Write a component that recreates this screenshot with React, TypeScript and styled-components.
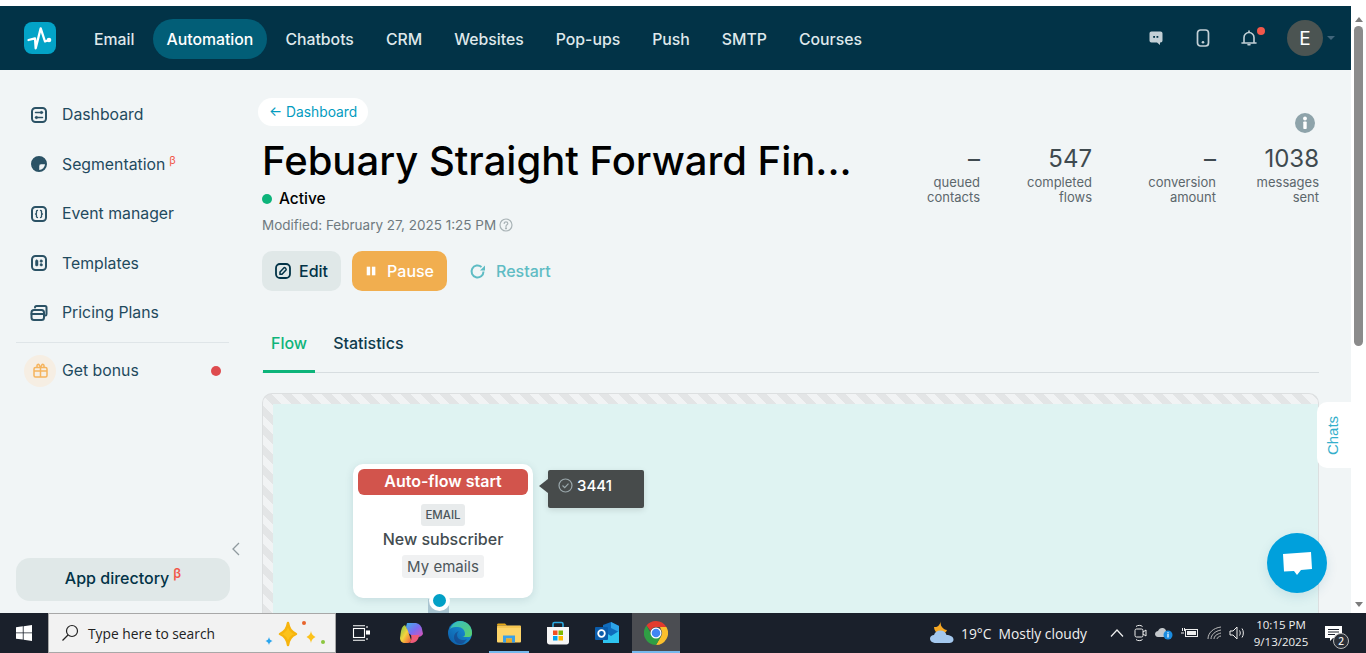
import React from "react";
import styled, { createGlobalStyle } from "styled-components";

const GlobalStyle = createGlobalStyle`
  html, body { margin: 0; padding: 0; height: 100%; overflow: hidden; background: #fff; }
  * { box-sizing: border-box; }
  body { font-family: Inter, "Noto Sans", sans-serif; }
`;

const navItems = ["Email", "Automation", "Chatbots", "CRM", "Websites", "Pop-ups", "Push", "SMTP", "Courses"];

const stats = [
  { value: "–", label: ["queued", "contacts"] },
  { value: "547", label: ["completed", "flows"] },
  { value: "–", label: ["conversion", "amount"] },
  { value: "1038", label: ["messages", "sent"] },
];

const SideIcon = ({ children }: { children: React.ReactNode }) => (
  <svg width="18" height="18" viewBox="0 0 18 18" fill="none" stroke="#2b5265" strokeWidth="2" strokeLinecap="round" strokeLinejoin="round">
    {children}
  </svg>
);

const sideItems = [
  {
    label: "Dashboard",
    icon: (
      <SideIcon>
        <rect x="2" y="2" width="14" height="14" rx="3.5" />
        <path d="M5.500 6.500h7M5.500 11.500h7" strokeWidth="1.500" />
        <circle cx="11.500" cy="6.500" r="1.100" fill="#2b5265" strokeWidth="1" />
        <circle cx="6.500" cy="11.500" r="1.100" fill="#2b5265" strokeWidth="1" />
      </SideIcon>
    ),
  },
  {
    label: "Segmentation",
    beta: true,
    icon: (
      <SideIcon>
        <circle cx="9" cy="9" r="7" />
        <path d="M9 2.500a6.500 6.500 0 0 1 6.500 6.500H11a2 2 0 0 0-2 2v4.500a6.500 6.500 0 0 1 0-13z" fill="#2b5265" strokeWidth="0.5" />
      </SideIcon>
    ),
  },
  {
    label: "Event manager",
    icon: (
      <SideIcon>
        <rect x="2" y="2" width="14" height="14" rx="3.5" />
        <path d="M7.500 5.500c-1.500 0-1 1.500-1 2.500 0 .6-.5 1-1 1 .5 0 1 .4 1 1 0 1-.5 2.500 1 2.500M10.500 5.500c1.500 0 1 1.500 1 2.500 0 .6.5 1 1 1-.5 0-1 .4-1 1 0 1 .5 2.500-1 2.500" strokeWidth="1.300" />
      </SideIcon>
    ),
  },
  {
    label: "Templates",
    icon: (
      <SideIcon>
        <rect x="2" y="2" width="14" height="14" rx="3.500" />
        <rect x="5.500" y="6" width="2.500" height="6" rx="1" fill="#2b5265" strokeWidth="0.5" />
        <rect x="10" y="6" width="2.500" height="2.300" rx="1" fill="#2b5265" strokeWidth="0.5" />
        <rect x="10" y="9.700" width="2.500" height="2.300" rx="1" fill="#2b5265" strokeWidth="0.5" />
      </SideIcon>
    ),
  },
  {
    label: "Pricing Plans",
    icon: (
      <SideIcon>
        <rect x="1.500" y="6" width="12.500" height="10" rx="2.500" />
        <path d="M1.500 10h12.500" />
        <path d="M5 3.500c0-1 .6-1.500 1.500-1.500H15c.8 0 1.500.7 1.500 1.500V10c0 .8-.4 1.500-1 1.500" />
      </SideIcon>
    ),
  },
];

const LogoMark = () => (
  <svg width="32" height="32" viewBox="0 0 32 32" fill="none">
    <rect width="32" height="32" rx="8" fill="#03a3c7" />
    <path d="M4.500 18 11 16.300l.7 10 5-20L21 19.500l4-1.500" stroke="#fff" strokeWidth="2.300" strokeLinecap="round" strokeLinejoin="round" />
    <circle cx="25" cy="18" r="2.300" fill="#fff" />
  </svg>
);

const WindowsLogo = () => (
  <svg width="16" height="16" viewBox="0 0 16 16" fill="#fff">
    <path d="M0 2.300 6.800 1.300v6.200H0zM7.600 1.200 16 0v7.500H7.600zM0 8.300h6.800v6.300L0 13.700zM7.600 8.300H16V16l-8.400-1.200z" />
  </svg>
);

const Sparkles = () => (
  <svg width="70" height="30" viewBox="0 0 70 30">
    <path d="M26 5c1 6 3 8.500 8 11-5 2.500-7 5-8 11-1-6-3-8.500-8-11 5-2.500 7-5 8-11z" fill="#fcc21b" stroke="#f6b40e" strokeWidth="2.500" strokeLinejoin="round" />
    <path d="M49 13c.5 3 1.500 4.500 4.500 6-3 1.500-4 3-4.500 6-.5-3-1.500-4.500-4.500-6 3-1.500 4-3 4.500-6z" fill="#fcc21b" />
    <path d="M7 19c.4 2 1 3 3.500 4-2.500 1-3.100 2-3.500 4-.4-2-1-3-3.500-4 2.500-1 3.100-2 3.500-4z" fill="#2aa5ee" />
    <circle cx="42" cy="5" r="2" fill="#e8642c" />
    <circle cx="61" cy="24" r="2" fill="#8cc63f" />
  </svg>
);

const TaskViewIcon = () => (
  <svg width="18" height="16" viewBox="0 0 18 16" fill="none" stroke="#fff" strokeWidth="1.100">
    <path d="M1 .8h12M1 15.200h12" />
    <rect x="1.500" y="3.500" width="11" height="9" />
    <path d="M15 1v2M15 13v2" />
    <rect x="14.500" y="6" width="3" height="3" fill="#fff" />
  </svg>
);

const CopilotIcon = () => (
  <svg width="24" height="24" viewBox="0 0 24 24">
    <defs>
      <linearGradient id="cop1" x1="0" y1="0" x2="1" y2="1">
        <stop offset="0" stopColor="#3fb0e8" />
        <stop offset="0.5" stopColor="#7b6cf0" />
        <stop offset="1" stopColor="#e34fb0" />
      </linearGradient>
      <linearGradient id="cop2" x1="0" y1="0" x2="1" y2="1">
        <stop offset="0" stopColor="#6fc24a" />
        <stop offset="0.5" stopColor="#f4d33d" />
        <stop offset="1" stopColor="#f0533e" />
      </linearGradient>
    </defs>
    <path d="M8 2h8c3 0 6 2 7 6l1 5c-1 2-3 3-5 3h-4L9 12 7 6z" fill="url(#cop1)" />
    <path d="M2 10C3 6 4 5 6 4l3 6 3 9c0 2-1 3-3 3H6c-3 0-5-2-5-5z" fill="url(#cop2)" />
    <path d="M12 14h8c0 4-3 8-7 8h-2c1-2 2-5 1-8z" fill="#ee5b7a" />
  </svg>
);

const EdgeIcon = () => (
  <svg width="24" height="24" viewBox="0 0 24 24">
    <defs>
      <linearGradient id="edge1" x1="0" y1="1" x2="1" y2="0">
        <stop offset="0" stopColor="#0c59a4" />
        <stop offset="1" stopColor="#1b9de2" />
      </linearGradient>
      <linearGradient id="edge2" x1="0" y1="0" x2="1" y2="1">
        <stop offset="0" stopColor="#33bcc8" />
        <stop offset="1" stopColor="#5ed16a" />
      </linearGradient>
    </defs>
    <circle cx="12" cy="12" r="12" fill="url(#edge1)" />
    <path d="M2 8C4 3 8 0 12 0c7 0 12 5 12 12 0 2-1 4-3 4h-7c2 0 3-1 3-3 0-4-3-7-7-7-3 0-6 0-8 2z" fill="url(#edge2)" />
    <path d="M9 14c0 3 3 5 6 5 2 0 3-.4 4-1-2 3-4 5-7 5-3 0-6-3-6-7 0-3 2-5 5-6-1 1-2 2-2 4z" fill="#1a2e6e" opacity="0.45" />
  </svg>
);

const ExplorerIcon = () => (
  <svg width="24" height="20" viewBox="0 0 24 20">
    <path d="M0 2c0-1 .5-1.500 1.500-1.500H8L10 2.500H0z" fill="#e6a817" />
    <rect x="0" y="2.500" width="24" height="17" rx="1" fill="#fdd469" />
    <path d="M0 4h24" stroke="#f0b93a" strokeWidth="1" />
    <path d="M6 19.500V12.500h12v7h-3V15.500H9v4z" fill="#3aa0e8" />
    <rect x="9" y="15.500" width="6" height="4" fill="#e8a92a" />
  </svg>
);

const StoreIcon = () => (
  <svg width="24" height="24" viewBox="0 0 24 24">
    <path d="M7 6V3c0-1 .6-1.500 1.500-1.500h7C16.400 1.500 17 2 17 3v3" fill="none" stroke="#2aa9e0" strokeWidth="1.600" />
    <path d="M1 6h22v15c0 1.500-1 2.500-2.500 2.500h-17C2 23.500 1 22.500 1 21z" fill="#f6f6f6" />
    <rect x="7" y="9.500" width="4.500" height="4.500" fill="#f25022" />
    <rect x="12.500" y="9.500" width="4.500" height="4.500" fill="#7fba00" />
    <rect x="7" y="15" width="4.500" height="4.500" fill="#00a4ef" />
    <rect x="12.500" y="15" width="4.500" height="4.500" fill="#ffb900" />
  </svg>
);

const OutlookIcon = () => (
  <svg width="24" height="24" viewBox="0 0 24 24">
    <path d="M8 4 16 1l8 4v14H8z" fill="#0f6cbd" />
    <path d="M16 1l8 4v6l-8-4z" fill="#2da4e8" />
    <path d="M8 10l8 5 8-5v12H8z" fill="#2ec4f0" />
    <rect x="0" y="6" width="13" height="13" rx="1" fill="#0a5cab" />
    <circle cx="6.500" cy="12.500" r="3.300" fill="none" stroke="#fff" strokeWidth="1.800" />
  </svg>
);

const ChromeIcon = () => (
  <svg width="24" height="24" viewBox="0 0 24 24">
    <path d="M12 0a12 12 0 0 1 10.400 6H12a6 6 0 0 0-5.600 3.800L2.500 4.600A12 12 0 0 1 12 0z" fill="#e33b2e" />
    <path d="M22.400 6A12 12 0 0 1 12 24l5.200-9A6 6 0 0 0 17 8.500L16 6z" fill="#fbc02d" />
    <path d="M2.500 4.600 7.700 14a6 6 0 0 0 9.500 1L12 24A12 12 0 0 1 2.500 4.600z" fill="#2f9e44" />
    <circle cx="12" cy="12" r="5.500" fill="#fff" />
    <circle cx="12" cy="12" r="4.300" fill="#4285f4" />
  </svg>
);

const WeatherIcon = () => (
  <svg width="26" height="26" viewBox="0 0 26 26">
    <path d="M12 1c-1 3 0 6 3 8 1 .6 2 1 3 1-1 3-4 5-8 4-3-1-5-4-5-7 2 .3 4-.2 5-2 1-1.500 2-3 2-4z" fill="#f7a823" />
    <path d="M7 23c-3 0-6-1.500-6-4.500 0-2 2-3.500 4-3.500 1-3 3-4.500 6.500-4.500 3 0 5.500 2 6 4.500 3.500 0 7 1.500 7 4.500s-3 3.500-6 3.500z" fill="#a4c8ee" />
  </svg>
);

const Page = styled.div`
  width: 1366px;
  height: 653px;
  display: flex;
  flex-direction: column;
  overflow: hidden;
`;

const Browser = styled.div`
  flex: 1;
  min-height: 0;
  display: flex;
`;

const Viewport = styled.div`
  position: relative;
  flex: 1;
  min-width: 0;
  padding-top: 6px;
  display: flex;
  flex-direction: column;
  background: #fff;
`;

const Scrollbar = styled.div`
  width: 15px;
  display: flex;
  flex-direction: column;
  align-items: center;
  background: #fff;
`;

const ScrollArrow = styled.div<{ $down?: boolean }>`
  width: 0;
  height: 0;
  margin: 17px 0 4px;
  border-left: 4.500px solid transparent;
  border-right: 4.500px solid transparent;
  border-bottom: 5px solid #7c7c7c;
  ${(p) => p.$down && "margin: auto 0 6px; border-bottom: 0; border-top: 5px solid #7c7c7c;"}
`;

const ScrollThumb = styled.div`
  width: 9px;
  height: 320px;
  border-radius: 5px;
  background: #8b8b8b;
`;

const Header = styled.header`
  height: 64px;
  flex-shrink: 0;
  display: flex;
  align-items: center;
  padding: 0 16px 0 24px;
  background: #023347;
`;

const Nav = styled.nav`
  display: flex;
  align-items: center;
  gap: 4px;
  margin: 2px 0 0 24px;
`;

const NavItem = styled.a<{ $active?: boolean }>`
  height: 40px;
  padding: 0 14px;
  display: flex;
  align-items: center;
  border-radius: 20px;
  font-size: 15.800px;
  font-weight: 500;
  color: ${(p) => (p.$active ? "#fff" : "#dfe8eb")};
  background: ${(p) => (p.$active ? "#025e77" : "transparent")};
`;

const HeaderTools = styled.div`
  margin-left: auto;
  display: flex;
  align-items: center;
`;

const ToolSlot = styled.div<{ $width: number }>`
  position: relative;
  width: ${(p) => p.$width}px;
  height: 24px;
  display: flex;
  align-items: center;
  justify-content: center;
`;

const BellDot = styled.span`
  position: absolute;
  top: 1px;
  right: 7px;
  width: 8px;
  height: 8px;
  border-radius: 50%;
  background: #f2584b;
`;

const Avatar = styled.div`
  width: 36px;
  height: 36px;
  margin-left: 15px;
  border-radius: 50%;
  display: flex;
  align-items: center;
  justify-content: center;
  background: #4b5452;
  color: #fff;
  font-size: 19px;
`;

const Caret = styled.span`
  width: 0;
  height: 0;
  margin-left: 4px;
  border-left: 4px solid transparent;
  border-right: 4px solid transparent;
  border-top: 4px solid #41657a;
`;

const Body = styled.div`
  flex: 1;
  min-height: 0;
  display: flex;
  overflow: hidden;
  background: #f1f5f6;
`;

const Sidebar = styled.aside`
  position: relative;
  width: 262px;
  flex-shrink: 0;
  padding: 20px 32px 12px 16px;
  display: flex;
  flex-direction: column;
`;

const SideRow = styled.div`
  height: 49.500px;
  display: flex;
  align-items: center;
  gap: 14px;
  padding-left: 14px;
  color: #1f4a5e;
  font-size: 15.800px;
`;

const Beta = styled.sup`
  margin-left: 4px;
  font-size: 11px;
  line-height: 0;
  vertical-align: 6px;
  color: #f2584b;
`;

const ButtonBeta = styled(Beta)`
  font-size: 13px;
  font-weight: 600;
`;

const SideDivider = styled.div`
  height: 1px;
  margin: 4px 1px 12px 0;
  background: #dfe5e8;
`;

const BonusRow = styled.div`
  display: flex;
  align-items: center;
  gap: 6px;
  padding-left: 8px;
  color: #1f4a5e;
  font-size: 15.800px;
`;

const BonusIcon = styled.div`
  width: 32px;
  height: 32px;
  border-radius: 50%;
  display: flex;
  align-items: center;
  justify-content: center;
  background: #f6eee3;
`;

const RedDot = styled.span`
  width: 10px;
  height: 10px;
  margin: 0 9px 0 auto;
  border-radius: 50%;
  background: #de4b4e;
`;

const CollapseHandle = styled.div`
  position: absolute;
  left: 231px;
  top: 472px;
  line-height: 0;
`;

const AppDirectory = styled.button`
  margin-top: auto;
  height: 43px;
  padding: 0 0 3px;
  border: 0;
  border-radius: 14px;
  background: #e0e8e8;
  color: #023347;
  font: 500 16px Inter, "Noto Sans", sans-serif;
`;

const Main = styled.main`
  flex: 1;
  min-width: 0;
  padding: 28px 32px 0 0;
  display: flex;
  flex-direction: column;
`;

const TopRow = styled.div`
  display: flex;
  justify-content: space-between;
`;

const BackLink = styled.a`
  display: inline-block;
  height: 28px;
  margin-left: -4px;
  padding: 0 11px;
  border-radius: 14px;
  background: #fff;
  color: #039cc0;
  font-size: 13.800px;
  line-height: 28px;
`;

const TitleBlock = styled.div`
  min-width: 0;
`;

const Title = styled.h1`
  margin: 12px 0 0;
  font-size: 40px;
  font-weight: 500;
  line-height: 46px;
  color: #000;
  white-space: nowrap;
`;

const StatusLine = styled.div`
  margin-top: 5px;
  display: flex;
  align-items: center;
  gap: 7px;
  font-size: 15.500px;
  font-weight: 500;
  line-height: 20px;
  color: #000;
`;

const StatusDot = styled.span`
  width: 10px;
  height: 10px;
  border-radius: 50%;
  background: #0db47a;
`;

const Modified = styled.div`
  margin-top: 6px;
  display: flex;
  align-items: center;
  gap: 3px;
  font-size: 13.500px;
  line-height: 20px;
  color: #6f7a80;
`;

const Actions = styled.div`
  margin-top: 16px;
  display: flex;
  gap: 11px;
`;

const ActionButton = styled.button<{ $kind: "edit" | "pause" | "restart" }>`
  height: 40px;
  padding: 0 ${(p) => ({ edit: "13px", pause: "13px 0 13px", restart: "8px" })[p.$kind]};
  ${(p) => p.$kind === "pause" && "width: 95px;"}
  ${(p) => p.$kind === "restart" && "margin-left: 3px;"}
  display: flex;
  align-items: center;
  gap: ${(p) => (p.$kind === "edit" ? 8 : 10)}px;
  border: 0;
  border-radius: 10px;
  font: 500 16px Inter, "Noto Sans", sans-serif;
  color: ${(p) => ({ edit: "#023347", pause: "#fff", restart: "#5fbcc4" })[p.$kind]};
  background: ${(p) => ({ edit: "#e0e8e8", pause: "#f1ae4f", restart: "transparent" })[p.$kind]};
`;

const StatsColumn = styled.div`
  display: flex;
  flex-direction: column;
  align-items: flex-end;
  padding-top: 15px;
`;

const InfoBadge = styled.div`
  width: 20px;
  height: 20px;
  margin-right: 4px;
  line-height: 0;
`;

const StatsGrid = styled.div`
  margin-top: 11px;
  display: grid;
  grid-template-columns: 61px 112px 124px 103px;
  text-align: right;
`;

const StatValue = styled.div`
  font-size: 24px;
  line-height: 30px;
  color: #3f4a4f;
`;

const StatLabel = styled.div`
  margin-top: 1px;
  font-size: 13px;
  line-height: 15px;
  color: #5c676c;
  white-space: nowrap;
`;

const Tabs = styled.div`
  margin-top: 23px;
  height: 59px;
  flex-shrink: 0;
  padding-left: 1px;
  display: flex;
  gap: 10px;
  border-bottom: 1px solid #d7dde0;
`;

const Tab = styled.div<{ $active?: boolean }>`
  height: 59px;
  padding: 19px 8px 0;
  font-size: 16px;
  font-weight: 500;
  line-height: 20px;
  color: ${(p) => (p.$active ? "#0db47a" : "#0f3b4d")};
  border-bottom: 3px solid ${(p) => (p.$active ? "#0db47a" : "transparent")};
`;

const CanvasFrame = styled.section`
  margin-top: 20px;
  flex: 1;
  padding: 10px 0 0 10px;
  border: 1px solid #dcdfe0;
  border-bottom: 0;
  border-radius: 10px 10px 0 0;
  display: flex;
  background: repeating-linear-gradient(45deg, #e3e5e6 0 7px, #f1f3f4 7px 14px);
`;

const CanvasArea = styled.div`
  position: relative;
  flex: 1;
  background: #dff3f2;
`;

const FlowNode = styled.div`
  position: absolute;
  left: 80px;
  top: 60px;
  width: 180px;
  height: 134px;
  padding: 5px;
  border-radius: 10px;
  background: #fff;
  box-shadow: 0 2px 8px rgba(0, 60, 80, 0.12);
  display: flex;
  flex-direction: column;
  align-items: center;
`;

const NodeHeader = styled.div`
  width: 100%;
  height: 26px;
  border-radius: 6px;
  background: #d2544c;
  color: #fff;
  font-size: 16px;
  font-weight: 600;
  line-height: 25px;
  text-align: center;
`;

const TypeTag = styled.div`
  margin-top: 9px;
  height: 22px;
  padding: 0 4px;
  border-radius: 3px;
  background: #e8ebec;
  color: #4c565b;
  font-size: 11.500px;
  font-weight: 500;
  line-height: 22px;
`;

const NodeName = styled.div`
  margin-top: 3px;
  font-size: 16px;
  font-weight: 500;
  line-height: 20px;
  color: #434c50;
`;

const NodeList = styled.div`
  margin-top: 6px;
  height: 23px;
  padding: 0 5px;
  border-radius: 3px;
  background: #f0f1f2;
  color: #4d565a;
  font-size: 15px;
  line-height: 23px;
`;

const NodeConnector = styled.div`
  position: absolute;
  left: 75px;
  bottom: -15px;
  width: 21px;
  height: 14px;
  background: #a9c5d1;
`;

const NodePort = styled.div`
  position: absolute;
  left: 76px;
  bottom: -13px;
  width: 21px;
  height: 21px;
  border: 4px solid #fff;
  border-radius: 50%;
  background: #03a0c6;
`;

const CountTip = styled.div`
  position: absolute;
  left: 275px;
  top: 66px;
  width: 96px;
  height: 38px;
  padding: 0 0 7px 10px;
  display: flex;
  align-items: center;
  gap: 4px;
  border-radius: 2px;
  background: #474b4b;
  color: #fff;
  font-size: 15px;
  font-weight: 500;
  box-shadow: 0 2px 6px rgba(0, 0, 0, 0.12);
  &::before {
    content: "";
    position: absolute;
    left: -9px;
    top: 9px;
    border-top: 7px solid transparent;
    border-bottom: 7px solid transparent;
    border-right: 9px solid #474b4b;
  }
`;

const ChatsTab = styled.div`
  position: absolute;
  right: 0;
  top: 402px;
  width: 34px;
  height: 66px;
  padding-right: 2px;
  border-radius: 10px 0 0 10px;
  background: #fff;
  display: flex;
  align-items: center;
  justify-content: center;
  color: #35afcb;
  font: 15px "Liberation Sans", sans-serif;
  span {
    transform: rotate(-90deg);
  }
`;

const ChatBubble = styled.div`
  position: absolute;
  left: 1267px;
  top: 533px;
  width: 60px;
  height: 60px;
  border-radius: 50%;
  background: #00a0dc;
  box-shadow: 0 4px 12px rgba(0, 100, 140, 0.12);
  display: flex;
  align-items: center;
  justify-content: center;
`;

const Taskbar = styled.footer`
  height: 40px;
  flex-shrink: 0;
  display: flex;
  align-items: stretch;
  background: #1a202b;
  color: #fff;
  font-family: "Open Sans", "Noto Sans", sans-serif;
`;

const StartButton = styled.div`
  width: 48px;
  display: flex;
  align-items: center;
  justify-content: center;
`;

const SearchBox = styled.div`
  width: 288px;
  padding: 0 3px 0 12px;
  display: flex;
  align-items: center;
  gap: 9px;
  background: #f2f2f2;
  border: 1px solid #a8a8a8;
  color: #222;
  font-size: 13.800px;
`;

const SearchHint = styled.span`
  flex: 1;
  white-space: nowrap;
`;

const TaskIcon = styled.div<{ $open?: boolean; $active?: boolean; $width?: number }>`
  position: relative;
  width: ${(p) => p.$width ?? 48}px;
  margin-right: ${(p) => (p.$active ? 0 : "1px")};
  display: flex;
  align-items: center;
  justify-content: center;
  background: ${(p) => (p.$active ? "#4b4d52" : "transparent")};
  ${(p) =>
    p.$open &&
    `&::after {
      content: "";
      position: absolute;
      bottom: 0;
      left: 50%;
      width: ${p.$active ? 48 : 40}px;
      height: 2px;
      transform: translateX(-50%);
      background: #76b9ed;
    }`}
`;

const Tray = styled.div`
  margin-left: auto;
  display: flex;
  align-items: center;
  height: 100%;
  font-size: 13.800px;
  color: #f0f0f0;
`;

const WeatherText = styled.span`
  margin: 0 18px 0 6px;
  white-space: nowrap;
`;

const TraySlot = styled.div<{ $width: number }>`
  width: ${(p) => p.$width}px;
  display: flex;
  align-items: center;
  justify-content: center;
`;

const Clock = styled.div`
  width: 60px;
  margin-left: 3px;
  text-align: center;
  font-size: 11.500px;
  line-height: 17px;
  white-space: nowrap;
`;

const NotifyWrap = styled.div`
  position: relative;
  width: 30px;
  height: 100%;
  margin: 0 18px 0 7px;
  display: flex;
  align-items: center;
  justify-content: center;
`;

const NotifyCount = styled.span`
  position: absolute;
  left: 15px;
  top: 20px;
  width: 16px;
  height: 16px;
  border-radius: 50%;
  border: 1px solid #b8b8b8;
  background: #2a2f38;
  font-size: 10px;
  font-weight: 600;
  line-height: 14px;
  text-align: center;
`;

const App = () => (
  <Page>
    <GlobalStyle />
    <Browser>
      <Viewport>
        <Header>
          <LogoMark />
          <Nav>
            {navItems.map((item) => (
              <NavItem key={item} $active={item === "Automation"}>
                {item}
              </NavItem>
            ))}
          </Nav>
          <HeaderTools>
            <ToolSlot $width={47}>
              <svg width="16" height="16" viewBox="0 0 16 16">
                <path d="M3.500 1.500h9c1.200 0 2 .8 2 2v7c0 1.200-.8 2-2 2h-.5v2.500l-3-2.500H3.500c-1.200 0-2-.8-2-2v-7c0-1.200.8-2 2-2z" fill="#c3d0d6" />
                <rect x="5.200" y="6" width="1.800" height="1.800" fill="#023347" />
                <rect x="8.500" y="6" width="1.800" height="1.800" fill="#023347" />
              </svg>
            </ToolSlot>
            <ToolSlot $width={47}>
              <svg width="14" height="18" viewBox="0 0 14 18" fill="none">
                <rect x="1.500" y="1" width="11" height="16" rx="3" stroke="#c3d0d6" strokeWidth="1.700" />
                <circle cx="7" cy="13.200" r="1.300" fill="#c3d0d6" />
              </svg>
            </ToolSlot>
            <ToolSlot $width={46}>
              <svg width="18" height="18" viewBox="0 0 18 18" fill="none" stroke="#c3d0d6" strokeWidth="1.600" strokeLinecap="round">
                <path d="M4 13.500V8.500a5 5 0 0 1 10 0v5M2 14h14" />
                <path d="M8 15.800h2M9 2v1" />
              </svg>
              <BellDot />
            </ToolSlot>
            <Avatar>E</Avatar>
            <Caret />
          </HeaderTools>
        </Header>
        <Body>
          <Sidebar>
            {sideItems.map((item) => (
              <SideRow key={item.label}>
                {item.icon}
                <span>
                  {item.label}
                  {item.beta && <Beta>β</Beta>}
                </span>
              </SideRow>
            ))}
            <SideDivider />
            <BonusRow>
              <BonusIcon>
                <svg width="15" height="15" viewBox="0 0 15 15" fill="none" stroke="#f5b45e" strokeWidth="1.500" strokeLinejoin="round">
                  <rect x="1" y="4.500" width="13" height="9.500" rx="1.500" />
                  <path d="M1 8h13M7.500 4.500V14" />
                  <path d="M4 4.500V2.500c0-1 1.500-1.500 2-.8l1.500 2.800L9 1.700c.5-.7 2-.2 2 .8v2" />
                </svg>
              </BonusIcon>
              <span>Get bonus</span>
              <RedDot />
            </BonusRow>
            <CollapseHandle>
              <svg width="10" height="14" viewBox="0 0 10 14" fill="none" stroke="#8f9a9e" strokeWidth="1.300">
                <path d="M8 1 2 7l6 6" />
              </svg>
            </CollapseHandle>
            <AppDirectory>
              App directory<ButtonBeta>β</ButtonBeta>
            </AppDirectory>
          </Sidebar>
          <Main>
            <TopRow>
              <TitleBlock>
                <BackLink>← Dashboard</BackLink>
                <Title>Febuary Straight Forward Fin...</Title>
                <StatusLine>
                  <StatusDot />
                  Active
                </StatusLine>
                <Modified>
                  Modified: February 27, 2025 1:25 PM
                  <svg width="14" height="14" viewBox="0 0 14 14" fill="none" stroke="#a9b3b6" strokeWidth="1.200">
                    <circle cx="7" cy="7" r="6" />
                    <path d="M5.200 5.500c0-2.300 3.600-2.300 3.600 0 0 1.400-1.800 1.300-1.800 3" strokeLinecap="round" />
                    <circle cx="7" cy="10.300" r="0.500" fill="#a9b3b6" />
                  </svg>
                </Modified>
                <Actions>
                  <ActionButton $kind="edit">
                    <svg width="16" height="16" viewBox="0 0 16 16" fill="none" stroke="#023347" strokeWidth="1.800">
                      <rect x="1" y="1" width="14" height="14" rx="4" />
                      <path d="M5 11.200V9l4-4.200c.7-.7 2.800 1 2 2.200L7 11.200z" strokeWidth="1.500" />
                    </svg>
                    Edit
                  </ActionButton>
                  <ActionButton $kind="pause">
                    <svg width="14" height="14" viewBox="0 0 14 14" fill="#fff">
                      <rect x="2" y="2" width="4" height="10" />
                      <rect x="8" y="2" width="4" height="10" />
                    </svg>
                    Pause
                  </ActionButton>
                  <ActionButton $kind="restart">
                    <svg width="17" height="17" viewBox="0 0 17 17" fill="none" stroke="#5fbcc4" strokeWidth="2">
                      <path d="M14.500 8.500a6 6 0 1 1-2-4.500" />
                      <path d="M11 7.500h5v-5z" fill="#5fbcc4" stroke="none" />
                    </svg>
                    Restart
                  </ActionButton>
                </Actions>
              </TitleBlock>
              <StatsColumn>
                <InfoBadge>
                  <svg width="20" height="20" viewBox="0 0 20 20">
                    <circle cx="10" cy="10" r="10" fill="#8ea3aa" />
                    <rect x="8.300" y="8.500" width="3.400" height="7.500" rx="0.800" fill="#fff" />
                    <circle cx="10" cy="5.500" r="1.900" fill="#fff" />
                  </svg>
                </InfoBadge>
                <StatsGrid>
                  {stats.map((stat) => (
                    <div key={stat.label[0]}>
                      <StatValue>{stat.value}</StatValue>
                      <StatLabel>
                        {stat.label[0]}
                        <br />
                        {stat.label[1]}
                      </StatLabel>
                    </div>
                  ))}
                </StatsGrid>
              </StatsColumn>
            </TopRow>
            <Tabs>
              <Tab $active>Flow</Tab>
              <Tab>Statistics</Tab>
            </Tabs>
            <CanvasFrame>
              <CanvasArea>
                <FlowNode>
                  <NodeHeader>Auto-flow start</NodeHeader>
                  <TypeTag>EMAIL</TypeTag>
                  <NodeName>New subscriber</NodeName>
                  <NodeList>My emails</NodeList>
                  <NodeConnector />
                  <NodePort />
                </FlowNode>
                <CountTip>
                  <svg width="15" height="15" viewBox="0 0 15 15" fill="none" stroke="#9aa7ab" strokeWidth="1.200">
                    <circle cx="7.500" cy="7.500" r="6.500" />
                    <path d="M4.500 7.500l2.200 2.200 3.800-4" />
                  </svg>
                  3441
                </CountTip>
              </CanvasArea>
            </CanvasFrame>
          </Main>
        </Body>
        <ChatsTab>
          <span>Chats</span>
        </ChatsTab>
        <ChatBubble>
          <svg width="32" height="28" viewBox="0 0 32 28">
            <path d="M2 5 30 3l1 17-11 1-4 5-3-4-10 .5z" fill="#fff" />
          </svg>
        </ChatBubble>
      </Viewport>
      <Scrollbar>
        <ScrollArrow />
        <ScrollThumb />
        <ScrollArrow $down />
      </Scrollbar>
    </Browser>
    <Taskbar>
      <StartButton>
        <WindowsLogo />
      </StartButton>
      <SearchBox>
        <svg width="18" height="18" viewBox="0 0 18 18" fill="none" stroke="#222" strokeWidth="1.200">
          <circle cx="11" cy="7" r="5.500" />
          <path d="M7 11 1.500 16.500" />
        </svg>
        <SearchHint>Type here to search</SearchHint>
        <Sparkles />
      </SearchBox>
      <TaskIcon $width={50}><TaskViewIcon /></TaskIcon>
      <TaskIcon><CopilotIcon /></TaskIcon>
      <TaskIcon><EdgeIcon /></TaskIcon>
      <TaskIcon $open><ExplorerIcon /></TaskIcon>
      <TaskIcon><StoreIcon /></TaskIcon>
      <TaskIcon><OutlookIcon /></TaskIcon>
      <TaskIcon $open $active><ChromeIcon /></TaskIcon>
      <Tray>
        <WeatherIcon />
        <WeatherText>19°C&nbsp;&nbsp;Mostly cloudy</WeatherText>
        <TraySlot $width={24}>
          <svg width="14" height="8" viewBox="0 0 14 8" fill="none" stroke="#eee" strokeWidth="1.200"><path d="M1 7.500 7 1l6 6.500" /></svg>
        </TraySlot>
        <TraySlot $width={23}>
          <svg width="13" height="18" viewBox="0 0 13 18" fill="none" stroke="#eee" strokeWidth="1"><rect x="1" y="5" width="8" height="8" rx="1.500" /><path d="M9 8l3-2v6l-3-2M2 2.500c1.500-1.500 5-1.500 6.500 0M2 15.500c1.500 1.500 5 1.500 6.500 0" /></svg>
        </TraySlot>
        <TraySlot $width={24}>
          <svg width="18" height="14" viewBox="0 0 18 14"><path d="M3 11C1 11 0 9.500 0 8c0-2 2-3 3-3 1-2.500 3-3.500 5-3 2 .5 3 2 3 3h3v6z" fill="#c4c8cc" /><circle cx="13" cy="9" r="4.500" fill="#1a8ce0" /><rect x="12.400" y="8" width="1.200" height="3.500" fill="#fff" /><rect x="12.400" y="6.200" width="1.200" height="1.200" fill="#fff" /></svg>
        </TraySlot>
        <TraySlot $width={26}>
          <svg width="17" height="12" viewBox="0 0 17 12" fill="none" stroke="#eee" strokeWidth="1"><rect x="4.500" y="2.500" width="12" height="7" /><rect x="6" y="4" width="9" height="4" fill="#eee" stroke="none" /><path d="M0 6h3M1.500 1v3M3.500 1v3" /></svg>
        </TraySlot>
        <TraySlot $width={24}>
          <svg width="15" height="14" viewBox="0 0 15 14" fill="none" stroke="#bbb" strokeWidth="1"><path d="M1 13C1 7 6 2 14 1M4 13c0-4 4-8 10-9M7 13c0-3 3-5 7-6M10 13c0-1 2-3 4-3" /></svg>
        </TraySlot>
        <TraySlot $width={22}>
          <svg width="16" height="14" viewBox="0 0 16 14" fill="none" stroke="#eee" strokeWidth="1"><path d="M1 5h3l4-4v12L4 9H1zM10.500 4.500c1 1.500 1 3.500 0 5M13 2.500c1.800 2.500 1.800 6.500 0 9" /></svg>
        </TraySlot>
        <Clock>
          10:15 PM
          <br />
          9/13/2025
        </Clock>
        <NotifyWrap>
          <svg width="17" height="16" viewBox="0 0 17 16">
            <path d="M0 1h17v12H8l-3 3v-3H0z" fill="#fff" />
            <path d="M3 4.500h11M3 7h11M3 9.500h7" stroke="#1a202b" strokeWidth="1" />
          </svg>
          <NotifyCount>2</NotifyCount>
        </NotifyWrap>
      </Tray>
    </Taskbar>
  </Page>
);

export default App;
